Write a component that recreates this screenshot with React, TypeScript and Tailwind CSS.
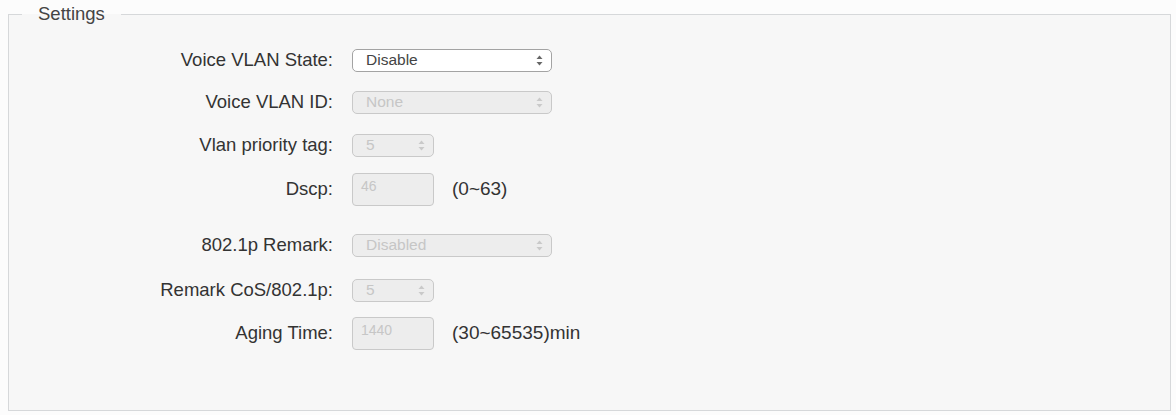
import React from 'react';

const font = { fontFamily: '"Liberation Sans", Arial, sans-serif' };

function Arrows({ disabled }: { disabled?: boolean }) {
  const c = disabled ? '#c9c9c9' : '#666';
  return (
    <svg width="7" height="11" viewBox="0 0 7 11" className="shrink-0">
      <path d="M3.5 0.5 L6.5 4 L0.5 4 Z" fill={c} />
      <path d="M3.5 10.5 L6.5 7 L0.5 7 Z" fill={c} />
    </svg>
  );
}

function Select({ value, wide, disabled }: { value: string; wide?: boolean; disabled?: boolean }) {
  return (
    <div
      className={`flex h-[23px] items-center justify-between rounded-[5px] border pl-[13px] pr-[8px] text-[15.5px] ${
        wide ? 'w-[200px]' : 'w-[82px]'
      } ${disabled ? 'border-[#c9c9c9] bg-[#ededed] text-[#c6c6c6]' : 'border-[#a3a3a3] bg-white text-[#444]'}`}
    >
      <span className="leading-none">{value}</span>
      <Arrows disabled={disabled} />
    </div>
  );
}

function TextBox({ value }: { value: string }) {
  return (
    <div className="h-[33px] w-[82px] rounded-[4px] border border-[#c9c9c9] bg-[#ededed] px-[8px] pt-[4px] text-[14px] leading-[16px] text-[#c6c6c6]">
      {value}
    </div>
  );
}

// row height comes in as a full class so Tailwind picks it up
function Row({ label, children, className }: { label: string; children: React.ReactNode; className: string }) {
  return (
    <div className={`flex items-center ${className}`}>
      <div className="w-[325px] pr-[1px] text-right text-[18.5px] text-[#333]">{label}</div>
      <div className="ml-[18px] flex items-center gap-[18px]">{children}</div>
    </div>
  );
}

export default function App() {
  return (
    <div className="h-[415px] w-[1176px] overflow-hidden bg-[#fcfcfc] pt-[3px]" style={font}>
      <fieldset className="ml-[8px] h-[408px] w-[1163px] border border-[#d6d8da] bg-[#f7f7f7]">
        <legend className="ml-[13px] px-[16px] text-[18.5px] leading-[22px] text-[#444]">Settings</legend>
        <div className="flex flex-col pt-[15px]">
          <Row label="Voice VLAN State:" className="h-[40px]">
            <Select value="Disable" wide />
          </Row>
          <Row label="Voice VLAN ID:" className="h-[44px]">
            <Select value="None" wide disabled />
          </Row>
          <Row label="Vlan priority tag:" className="h-[42px]">
            <Select value="5" disabled />
          </Row>
          <Row label="Dscp:" className="h-[46px]">
            <TextBox value="46" />
            <span className="text-[19px] text-[#333]">(0~63)</span>
          </Row>
          <Row label="802.1p Remark:" className="mt-[11px] h-[44px]">
            <Select value="Disabled" wide disabled />
          </Row>
          <Row label="Remark CoS/802.1p:" className="h-[46px]">
            <Select value="5" disabled />
          </Row>
          <Row label="Aging Time:" className="h-[40px]">
            <TextBox value="1440" />
            <span className="text-[19px] text-[#333]">(30~65535)min</span>
          </Row>
        </div>
      </fieldset>
    </div>
  );
}
